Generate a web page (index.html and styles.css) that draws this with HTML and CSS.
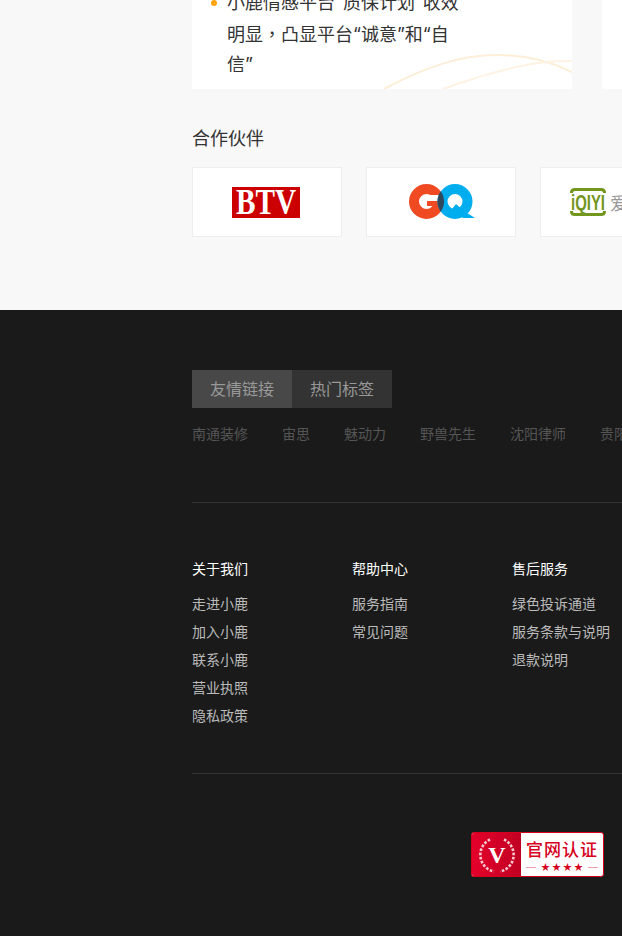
FILE: index.html
```html
<!DOCTYPE html>
<html>
<head>
  <meta charset="utf-8">
  <title>小鹿情感</title>
  <link rel="stylesheet" href="styles.css">
</head>
<body>
  <div class="main">
    <div class="container">
      <div class="cards">
        <div class="card">
          <svg class="card-wave" width="380" height="89" viewBox="0 0 380 89">
            <path d="M192 89C235 66 270 55 305 55C335 55 360 62 380 72" fill="none" stroke="#fdeed8" stroke-width="2"/>
            <path d="M251 89C290 75 325 65 355 62C365 61 372 61 380 61" fill="none" stroke="#fef2e2" stroke-width="2"/>
          </svg>
          <ul class="card-list">
            <li>小鹿情感平台“质保计划”收效明显<span class="comma">，</span>凸显平台“诚意”和“自信”</li>
          </ul>
        </div>
        <div class="card"></div>
      </div>

      <h2 class="title">合作伙伴</h2>
      <div class="partners">
        <div class="partner">
          <svg class="logo-left" width="68" height="31" viewBox="0 0 68 31">
            <rect width="68" height="31" fill="#cc0000"/>
            <text class="logo-btv" x="4" y="27" textLength="60" lengthAdjust="spacingAndGlyphs">BTV</text>
          </svg>
        </div>
        <div class="partner">
          <svg class="logo-right" width="68" height="36" viewBox="0 0 68 36">
            <circle cx="17.5" cy="17.5" r="12.5" fill="none" stroke="#f04a23" stroke-width="10"/>
            <rect x="18" y="17" width="16" height="5" fill="#f04a23"/>
            <rect x="20" y="11" width="12" height="6" fill="#fff"/>
            <circle cx="46" cy="17.5" r="12.5" fill="none" stroke="#00aeef" stroke-width="10"/>
            <polygon points="47,20 55,27 66,34 54,34 43,25" fill="#00aeef"/>
            <path d="M31.75 7.3A17.5 17.5 0 0 1 31.75 27.7A17.5 17.5 0 0 1 31.75 7.3Z" fill="#2f4a5e"/>
          </svg>
        </div>
        <div class="partner partner-iqiyi">
          <svg width="36" height="28" viewBox="0 0 36 28">
            <path d="M1.5 5V4.5Q1.5 1.5 5 1.5H31Q34.5 1.5 34.5 4.5V5M1.5 23V23.5Q1.5 26.5 5 26.5H31Q34.5 26.5 34.5 23.5V23" fill="none" stroke="#72961e" stroke-width="3"/>
            <text class="logo-iqiyi" x="1" y="22" textLength="34" lengthAdjust="spacingAndGlyphs">iQIYI</text>
          </svg>
          <span class="iqiyi-name">爱奇艺</span>
        </div>
      </div>
    </div>
  </div>

  <div class="footer">
    <div class="container">
      <div class="tabs">
        <div class="tab active">友情链接</div>
        <div class="tab">热门标签</div>
      </div>
      <div class="links">
        <a>南通装修</a>
        <a>宙思</a>
        <a>魅动力</a>
        <a>野兽先生</a>
        <a>沈阳律师</a>
        <a>贵阳装修</a>
      </div>

      <div class="columns">
        <div class="column">
          <h4>关于我们</h4>
          <a>走进小鹿</a>
          <a>加入小鹿</a>
          <a>联系小鹿</a>
          <a>营业执照</a>
          <a>隐私政策</a>
        </div>
        <div class="column">
          <h4>帮助中心</h4>
          <a>服务指南</a>
          <a>常见问题</a>
        </div>
        <div class="column">
          <h4>售后服务</h4>
          <a>绿色投诉通道</a>
          <a>服务条款与说明</a>
          <a>退款说明</a>
        </div>
      </div>

      <div class="badge">
        <div class="badge-left">
          <svg width="38" height="38" viewBox="0 0 38 38">
            <g fill="none" stroke="#f8c9d0" stroke-width="2.6" stroke-dasharray="2.6 1.6">
              <path d="M12 3.5A17 17 0 0 0 16 35.5"/>
              <path d="M26 3.5A17 17 0 0 1 22 35.5"/>
            </g>
            <text class="badge-v" x="19" y="27" text-anchor="middle">V</text>
          </svg>
        </div>
        <div class="badge-right">
          <div class="badge-name">官网认证</div>
          <div class="badge-stars"><i></i><span>★ ★ ★ ★</span><i></i></div>
        </div>
      </div>
    </div>
  </div>
</body>
</html>
```

FILE: styles.css
```css
html, body {
  height: 936px;
  overflow: hidden;
}

body {
  margin: 0;
  padding: 0;
  font-family: "Noto Sans CJK SC", "Liberation Sans", sans-serif;
}

.container {
  width: 1200px;
  margin-left: 192px;
}

.main {
  height: 310px;
  background-color: #f8f8f8;
}

.cards {
  display: flex;
  gap: 30px;
}

.card {
  position: relative;
  box-sizing: border-box;
  width: 380px;
  height: 89px;
  background-color: #fff;
}

.card-wave {
  position: absolute;
  left: 0;
  top: 0;
}

.card-list {
  position: relative;
  width: 240px;
  height: 72px;
  margin: 0;
  padding: 0 0 0 35px;
  overflow: hidden;
  list-style: none;
}

.card-list li {
  position: relative;
  margin-top: -12px;
  font-family: "Inter", "Noto Sans CJK SC", sans-serif;
  font-size: 18px;
  line-height: 30px;
  color: #333;
}

.card-list li::before {
  content: "";
  position: absolute;
  left: -16px;
  top: 12px;
  width: 6px;
  height: 6px;
  border-radius: 50%;
  background-color: #ffa30f;
}

.comma {
  font-family: "Noto Sans CJK TC", sans-serif;
}

.title {
  margin: 36px 0 18px;
  font-size: 18px;
  font-weight: normal;
  line-height: 24px;
  color: #333;
}

.partners {
  display: flex;
  gap: 24px;
}

.partner {
  box-sizing: border-box;
  display: flex;
  align-items: center;
  justify-content: center;
  width: 150px;
  height: 70px;
  background-color: #fff;
  border: 1px solid #eee;
}

.logo-left {
  margin-right: 2px;
}

.logo-right {
  margin-left: 4px;
}

.partner-iqiyi {
  justify-content: flex-start;
  gap: 4px;
  padding-left: 29px;
}

.logo-btv {
  font-family: "Liberation Serif", serif;
  font-size: 35px;
  font-weight: bold;
  fill: #fff;
}

.logo-iqiyi {
  font-family: "Liberation Sans", sans-serif;
  font-size: 22px;
  font-weight: bold;
  fill: #72961e;
}

.iqiyi-name {
  font-size: 18px;
  color: #999;
  white-space: nowrap;
}

.footer {
  height: 626px;
  padding-top: 60px;
  box-sizing: border-box;
  background-color: #1a1a1a;
}

.tabs {
  display: flex;
}

.tab {
  width: 100px;
  height: 38px;
  font-size: 16px;
  line-height: 37px;
  text-align: center;
  color: #999;
  background-color: #333;
}

.tab.active {
  background-color: #484848;
}

.links {
  display: flex;
  gap: 34px;
  height: 95px;
  padding-top: 15px;
  box-sizing: border-box;
  border-bottom: 1px solid #333;
  font-size: 14px;
  line-height: 20px;
  color: #555;
}

.columns {
  display: flex;
  height: 271px;
  padding-top: 54px;
  box-sizing: border-box;
  border-bottom: 1px solid #333;
}

.column {
  width: 160px;
}

.column h4 {
  margin: 0 0 10px;
  font-size: 14px;
  font-weight: normal;
  line-height: 22px;
  color: #fff;
}

.column a {
  display: block;
  font-size: 14px;
  line-height: 28px;
  color: #bbb;
}

.badge {
  box-sizing: border-box;
  display: flex;
  width: 133px;
  height: 45px;
  margin: 58px 0 0 279px;
  border: 1px solid #d6001c;
  border-radius: 3px;
  overflow: hidden;
  background-color: #fff;
}

.badge-left {
  display: flex;
  align-items: center;
  justify-content: center;
  width: 49px;
  background: linear-gradient(90deg, #e4002b, #c00022);
}

.badge-v {
  font-family: "Liberation Serif", serif;
  font-size: 24px;
  font-weight: bold;
  fill: #fff;
}

.badge-right {
  flex: 1;
  text-align: center;
}

.badge-name {
  margin-top: 4px;
  font-size: 17px;
  font-weight: 500;
  line-height: 24px;
  letter-spacing: 1px;
  color: #d6001c;
}

.badge-stars {
  display: flex;
  align-items: center;
  justify-content: center;
  gap: 5px;
  font-size: 9px;
  line-height: 12px;
  color: #d6001c;
}

.badge-stars i {
  width: 10px;
  height: 1px;
  background-color: #f0a0aa;
}
```
